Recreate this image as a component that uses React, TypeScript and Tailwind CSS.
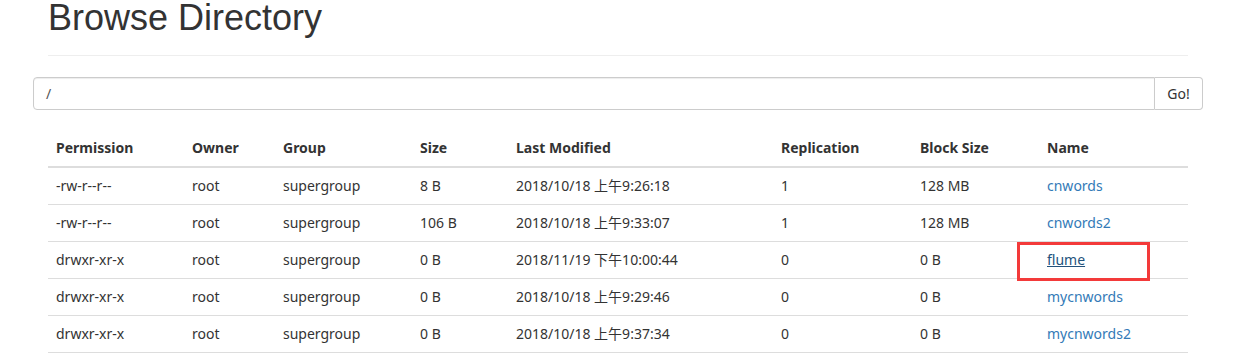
const rows = [
  { perm: '-rw-r--r--', owner: 'root', group: 'supergroup', size: '8 B', modified: '2018/10/18 上午9:26:18', repl: '1', block: '128 MB', name: 'cnwords' },
  { perm: '-rw-r--r--', owner: 'root', group: 'supergroup', size: '106 B', modified: '2018/10/18 上午9:33:07', repl: '1', block: '128 MB', name: 'cnwords2' },
  { perm: 'drwxr-xr-x', owner: 'root', group: 'supergroup', size: '0 B', modified: '2018/11/19 下午10:00:44', repl: '0', block: '0 B', name: 'flume' },
  { perm: 'drwxr-xr-x', owner: 'root', group: 'supergroup', size: '0 B', modified: '2018/10/18 上午9:29:46', repl: '0', block: '0 B', name: 'mycnwords' },
  { perm: 'drwxr-xr-x', owner: 'root', group: 'supergroup', size: '0 B', modified: '2018/10/18 上午9:37:34', repl: '0', block: '0 B', name: 'mycnwords2' },
];

const cols = [
  { label: 'Permission', w: 'w-[136px]' },
  { label: 'Owner', w: 'w-[91px]' },
  { label: 'Group', w: 'w-[137px]' },
  { label: 'Size', w: 'w-[96px]' },
  { label: 'Last Modified', w: 'w-[265px]' },
  { label: 'Replication', w: 'w-[139px]' },
  { label: 'Block Size', w: 'w-[127px]' },
  { label: 'Name', w: 'w-[149px]' },
];

export default function App() {
  return (
    <div className="w-[1233px] h-[354px] overflow-hidden bg-white text-[#333] text-sm font-['Noto_Sans','Noto_Sans_CJK_SC',sans-serif]">
      <div className="ml-[48px] w-[1140px]">
        <h1 className="text-[36px] leading-[34px] pt-[1px] font-['Liberation_Sans',Arial,sans-serif] text-[#333]">
          Browse Directory
        </h1>
        <hr className="mt-[20px] border-t border-[#eee]" />
      </div>

      <div className="ml-[33px] mt-[21px] w-[1170px] flex h-[33px]">
        <div className="flex-1 border border-[#ccc] rounded-l-[4px] px-[12px] flex items-center text-[#555] shadow-[inset_0_1px_1px_rgba(0,0,0,0.075)]">
          /
        </div>
        <button className="w-[48px] border border-l-0 border-[#ccc] rounded-r-[4px] text-[#333] bg-white">Go!</button>
      </div>

      <table className="ml-[48px] mt-[19px] w-[1140px] table-fixed border-collapse">
        <thead>
          <tr>
            {cols.map(c => (
              <th key={c.label} className={`${c.w} text-left font-bold px-[8px] h-[38px] border-b-2 border-[#ddd]`}>
                {c.label}
              </th>
            ))}
          </tr>
        </thead>
        <tbody>
          {rows.map(r => (
            <tr key={r.name} className="h-[37px] border-b border-[#ddd]">
              <td className="px-[8px]">{r.perm}</td>
              <td className="px-[8px]">{r.owner}</td>
              <td className="px-[8px]">{r.group}</td>
              <td className="px-[8px]">{r.size}</td>
              <td className="px-[8px]">{r.modified}</td>
              <td className="px-[8px]">{r.repl}</td>
              <td className="px-[8px]">{r.block}</td>
              <td className="px-[8px] relative">
                {r.name === 'flume' ? (
                  <>
                    <a className="text-[#23527c] underline">{r.name}</a>
                    <div className="absolute left-[-22px] top-0 w-[133px] h-[39px] border-[3px] border-[#f33a3a]" />
                  </>
                ) : (
                  <a className="text-[#337ab7]">{r.name}</a>
                )}
              </td>
            </tr>
          ))}
        </tbody>
      </table>
    </div>
  );
}
